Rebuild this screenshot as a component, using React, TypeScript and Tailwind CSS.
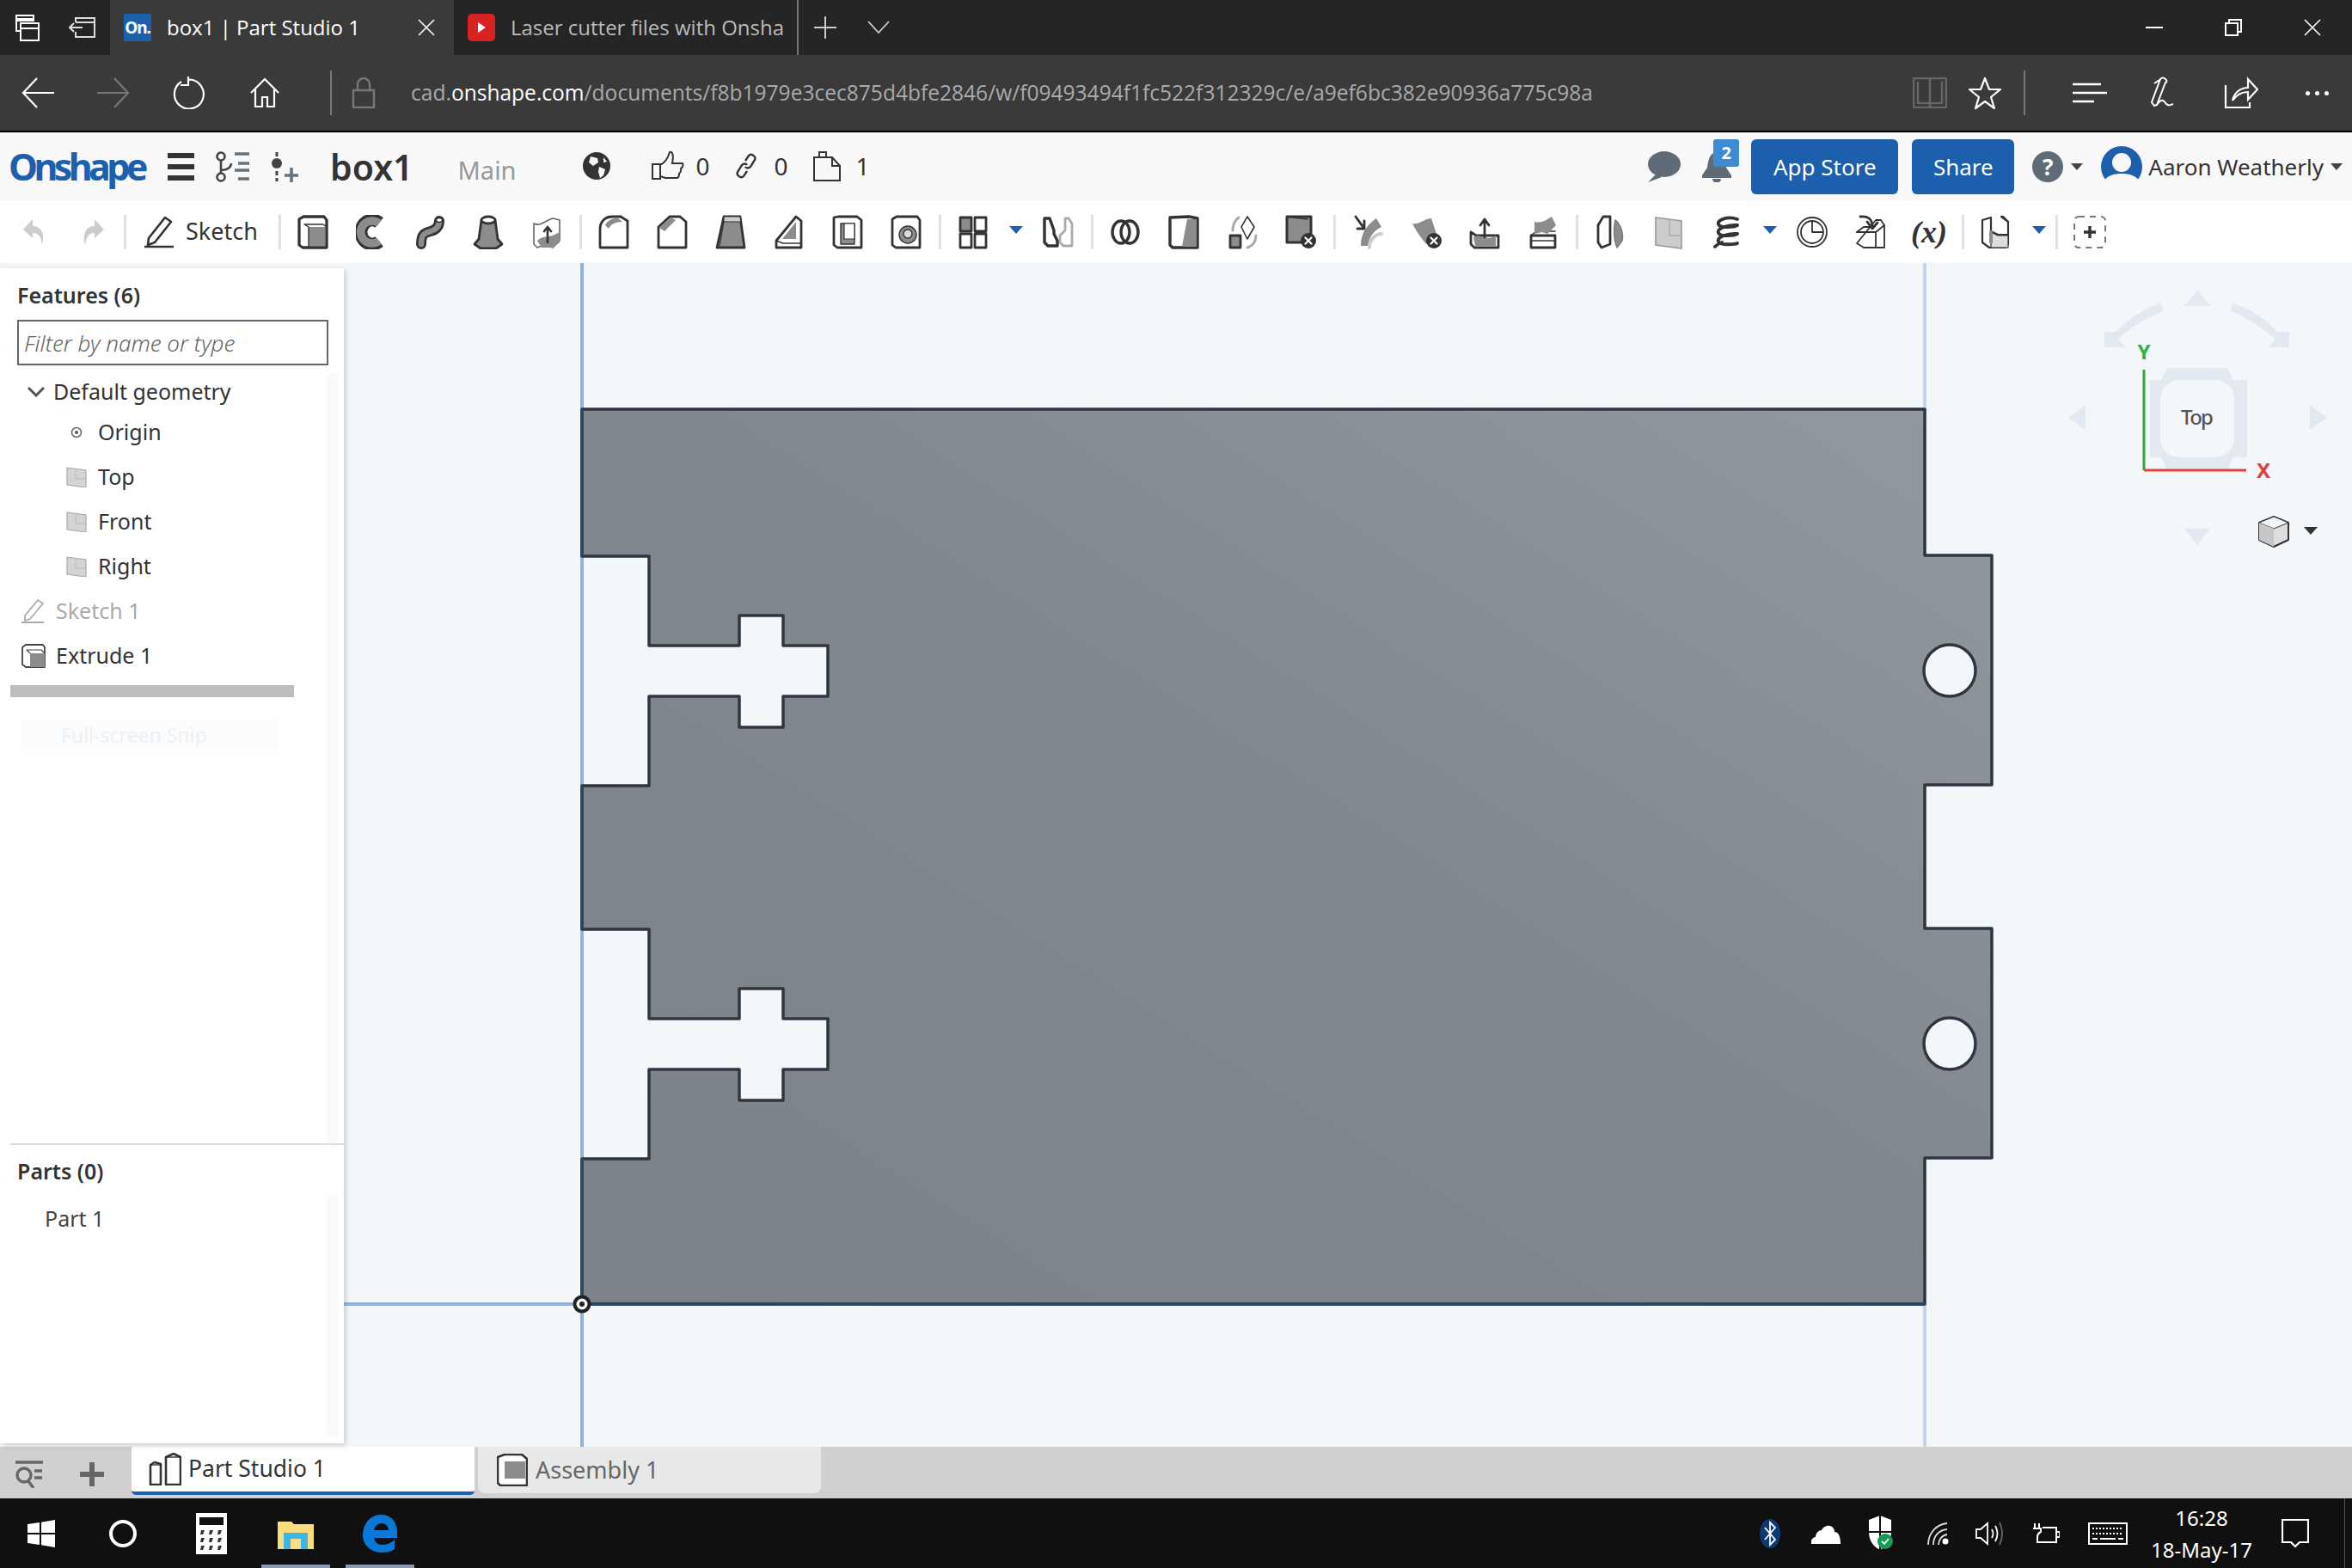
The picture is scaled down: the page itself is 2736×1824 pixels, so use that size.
import type { ReactNode } from "react";

const url =
  "/documents/f8b1979e3cec875d4bfe2846/w/f09493494f1fc522f312329c/e/a9ef6bc382e90936a775c98a";

// toolbar glyph wrapper, everything shares the same stroke setup
function Ico({ children }: { children: ReactNode }) {
  return (
    <svg
      viewBox="0 0 36 40"
      className="w-[36px] h-[40px]"
      fill="none"
      stroke="#333"
      strokeWidth={2.8}
      strokeLinejoin="round"
      strokeLinecap="round"
    >
      {children}
    </svg>
  );
}

const G = "#8c8c8c";

const BoxOutline = () => <path d="M2 5l5-3h24l3 4v32H6l-4-3z" fill="#fff" />;

const XBadge = () => (
  <g>
    <circle cx="27" cy="30" r="9" fill="#333" stroke="none" />
    <path d="M23.500 26.500l7 7m0-7l-7 7" stroke="#fff" strokeWidth={2.2} />
  </g>
);

const tools: Record<string, ReactNode> = {
  extrude: (
    <Ico>
      <BoxOutline />
      <path d="M13 14h21v24H13z" fill={G} stroke="none" />
      <path d="M13 14l-5-3h22l4 3M13 14v24" strokeWidth={1.4} />
      <path d="M2 5l5-3h24l3 4v32H6l-4-3z" />
    </Ico>
  ),
  revolve: (
    <Ico>
      <path d="M27 9A13 14 0 1 0 27 31" stroke="#333" strokeWidth={15} strokeLinecap="butt" />
      <path d="M27 10A13 13 0 1 0 27 30" stroke={G} strokeWidth={9.500} strokeLinecap="butt" />
      <path d="M31 19l-9 1 9 3" stroke="#fff" strokeWidth={1.6} />
    </Ico>
  ),
  sweep: (
    <Ico>
      <path d="M8 34c0-12 4-13 11-15s10-6 10-12" stroke="#333" strokeWidth={12} />
      <path d="M8 34c0-12 4-13 11-15s10-6 10-12" stroke={G} strokeWidth={6.500} />
      <ellipse cx="29" cy="6" rx="3.500" ry="2.500" fill="#fff" strokeWidth={1.4} />
    </Ico>
  ),
  loft: (
    <Ico>
      <path d="M10 6L7 28 2 34l7 5h18l7-5-5-6-3-22z" fill={G} />
      <ellipse cx="18" cy="6" rx="8" ry="4" fill="#fff" />
    </Ico>
  ),
  thicken: (
    <Ico>
      <path d="M3 10c8 4 14-4 22-6l8 2v24l-8 8c-8-4-14-2-18 0l-4-4z" fill="#fff" strokeWidth={1.6} stroke="#666" />
      <path d="M7 30c6-6 12-4 18-6l8-4v12l-8 6H12z" fill={G} stroke="none" />
      <path d="M19 32V14m-4 5l4-5 4 5" strokeWidth={2.6} />
    </Ico>
  ),
  fillet: (
    <Ico>
      <path d="M2 16C2 8 8 2 16 2h10l8 5v31H2z" fill="#fff" />
      <path d="M8 12c2-5 8-8 14-9l6 5c-8 0-14 3-16 8z" fill={G} stroke="none" />
    </Ico>
  ),
  chamfer: (
    <Ico>
      <path d="M2 14L15 2h12l7 6v30H2z" fill="#fff" />
      <path d="M3 15L16 3l6 3L9 19z" fill={G} stroke="none" />
    </Ico>
  ),
  draft: (
    <Ico>
      <path d="M10 2h19l5 36H2z" fill={G} />
      <path d="M10 2h19l1 6H10zM10 8L5 36" strokeWidth={1.2} fill="#ccc" />
    </Ico>
  ),
  rib: (
    <Ico>
      <path d="M26 2l6 5v31H3v-8z" fill="#fff" />
      <path d="M26 8v20H10z" fill={G} stroke="none" />
      <path d="M3 30l8 3h21" strokeWidth={1.6} />
    </Ico>
  ),
  shell: (
    <Ico>
      <path d="M2 3l5-1h22l5 4v32H6l-4-3z" fill="#fff" />
      <path d="M10 10h16v24H10z" fill={G} strokeWidth={1.4} />
      <path d="M14 10h12v18H14z" fill="#fff" strokeWidth={1.2} />
    </Ico>
  ),
  hole: (
    <Ico>
      <BoxOutline />
      <circle cx="20" cy="23" r="10" fill={G} strokeWidth={1.4} />
      <circle cx="20" cy="22" r="5" fill="#ddd" strokeWidth={1.4} />
    </Ico>
  ),
  pattern: (
    <Ico>
      <path d="M3 3h13v16H3z" fill={G} />
      <path d="M20 3h13v16H20zM3 22h13v16H3zM20 22h13v16H20z" fill="#fff" />
    </Ico>
  ),
  mirror: (
    <Ico>
      <path d="M20 24v8l4 4h10V10l-4-6h-4v14z" fill="#fff" stroke="#aaa" />
      <path d="M2 4h6l5 14v4l4 8v6H6l-4-4z" fill="#fff" strokeWidth={3.4} />
    </Ico>
  ),
  boolean: (
    <Ico>
      <ellipse cx="13" cy="20" rx="10" ry="13" strokeWidth={3.4} />
      <ellipse cx="23" cy="20" rx="10" ry="13" strokeWidth={3.4} />
    </Ico>
  ),
  split: (
    <Ico>
      <path d="M2 3l22-1 10 2v34H5l-3-3z" fill="#fff" strokeWidth={3.4} />
      <path d="M22 5h11v32H16z" fill={G} stroke="none" />
    </Ico>
  ),
  transform: (
    <Ico>
      <path d="M4 24h12v14H4z" fill={G} />
      <path d="M24 2l8 12-8 14-7-14z" fill="#fff" strokeWidth={1.6} />
      <path d="M7 18C7 10 10 6 14 3M34 24c0 8-4 12-10 14" stroke="#aaa" strokeWidth={3} />
    </Ico>
  ),
  deletePart: (
    <Ico>
      <path d="M2 2h28v30H2z" fill={G} strokeWidth={3} />
      <path d="M2 2l24 3" strokeWidth={1.4} />
      <XBadge />
    </Ico>
  ),
  moveFace: (
    <Ico>
      <path d="M10 36C10 24 14 14 28 4l6 10c-12 6-14 14-16 22z" fill={G} stroke="none" />
      <path d="M20 38c0-8 6-16 14-16" stroke="#ccc" strokeWidth={4} />
      <path d="M4 2l10 14m0-9v9H6" strokeWidth={2.8} />
    </Ico>
  ),
  deleteFace: (
    <Ico>
      <path d="M2 10c8 2 14-6 22-6l6 18-12 12C12 26 8 22 2 10z" fill={G} stroke="none" />
      <XBadge />
    </Ico>
  ),
  replaceFace: (
    <Ico>
      <path d="M2 20l6 4h26v14H6l-4-4z" fill="#fff" />
      <path d="M5 26c8-6 14 6 26-2v12H7z" fill={G} stroke="none" />
      <path d="M18 26V6m-5 6l5-7 5 7" strokeWidth={2.8} />
    </Ico>
  ),
  offsetFace: (
    <Ico>
      <path d="M4 24h28v14H4z" fill="#fff" />
      <path d="M4 24l6-5h22M4 30h28" strokeWidth={1.6} />
      <path d="M8 8c8 2 14-2 20-6l5 10-10 10-6-2-9 2z" fill={G} stroke="none" />
    </Ico>
  ),
  planeSolid: (
    <Ico>
      <path d="M4 12l6-10h8v32l-10 4-4-6z" fill="#fff" strokeWidth={2.8} />
      <path d="M24 6c6 4 10 16 8 24l-6 8c-4-8-4-24-2-32z" fill={G} stroke="#777" strokeWidth={1.4} />
    </Ico>
  ),
  plane: (
    <svg viewBox="0 0 36 40" className="w-[36px] h-[40px]">
      <path d="M3 3l30 4v32L3 35z" fill="#ccc" stroke="#999" strokeWidth={1.6} />
      <path d="M19 6v18h14" fill="none" stroke="#aaa" strokeWidth={1.4} />
    </svg>
  ),
  helix: (
    <Ico>
      <path
        d="M30 5C18 1 6 6 8 11s18 3 22 1M30 12C18 11 6 16 8 21s18 3 22 1M30 22C18 21 6 26 8 31s20 3 22 2M4 37c2-2 4-4 8-5"
        strokeWidth={3.8}
      />
    </Ico>
  ),
  clock: (
    <Ico>
      <circle cx="18" cy="20" r="17" strokeWidth={1.8} />
      <circle cx="18" cy="20" r="13" strokeWidth={1.8} />
      <path d="M18 8v12h12" strokeWidth={1.8} />
    </Ico>
  ),
  insert: (
    <Ico>
      <path d="M2 20l8-6h8M24 6h6l4 6v26H10L2 33z" fill="#fff" strokeWidth={1.8} />
      <path d="M2 20h22v18M24 20l10-8" strokeWidth={1.8} />
      <path d="M6 2c8-1 14 2 14 12m-6-6l6 8 6-7" strokeWidth={2.8} />
    </Ico>
  ),
  custom: (
    <Ico>
      <path d="M2 6l10-3v16l8 4h12V8l-6-6v0h-2l8 6v26l-3 4H10l-8-6z" fill="#fff" strokeWidth={2.2} />
      <path d="M12 20l8 4h12v14H12z" fill="#ddd" strokeWidth={1.2} />
      <path d="M12 20v12" stroke={G} strokeWidth={4} />
    </Ico>
  ),
  addCustom: (
    <svg viewBox="0 0 40 40" className="w-[40px] h-[40px]" fill="none">
      <rect x="2" y="2" width="36" height="36" rx="5" stroke="#777" strokeWidth={2} strokeDasharray="7 6" />
      <path d="M20 13v14M13 20h14" stroke="#333" strokeWidth={3.4} />
    </svg>
  ),
};

type ToolItem = { id: string } | "sep" | "caret" | "formula";

const toolRow: ToolItem[] = [
  { id: "extrude" }, { id: "revolve" }, { id: "sweep" }, { id: "loft" }, { id: "thicken" }, "sep",
  { id: "fillet" }, { id: "chamfer" }, { id: "draft" }, { id: "rib" }, { id: "shell" }, { id: "hole" }, "sep",
  { id: "pattern" }, "caret", { id: "mirror" }, "sep",
  { id: "boolean" }, { id: "split" }, { id: "transform" }, { id: "deletePart" }, "sep",
  { id: "moveFace" }, { id: "deleteFace" }, { id: "replaceFace" }, { id: "offsetFace" }, "sep",
  { id: "planeSolid" }, { id: "plane" }, { id: "helix" }, "caret", { id: "clock" }, { id: "insert" }, "formula", "sep",
  { id: "custom" }, "caret", "sep", { id: "addCustom" },
];

const Sep = () => <div className="w-[3px] h-[40px] ml-[4px] mr-[3px] bg-[#e0e0e0]" />;

const BlueCaret = () => (
  <div className="w-[31px] flex justify-center">
    <div className="w-0 h-0 border-x-[8px] border-x-transparent border-t-[9px] border-t-[#1b5fad] -mt-[6px]" />
  </div>
);

const DarkCaret = () => (
  <div className="w-0 h-0 border-x-[7px] border-x-transparent border-t-[8px] border-t-[#444]" />
);

function PlaneIcon() {
  return (
    <svg viewBox="0 0 24 24" className="w-[24px] h-[24px]">
      <path d="M1 1l22 3v20L1 21z" fill="#d4d4d4" stroke="#aaa" strokeWidth={1.2} />
      <path d="M11 3v11h12" fill="none" stroke="#bbb" strokeWidth={1} />
    </svg>
  );
}

function TreeRow({ icon, label, indent, muted }: { icon: ReactNode; label: string; indent?: boolean; muted?: boolean }) {
  return (
    <div className={`flex items-center h-[52px] ${indent ? "pl-[77px]" : "pl-[25px]"}`}>
      <div className={`flex items-center justify-center shrink-0 ${indent ? "w-[24px] mr-[13px]" : "w-[28px] mr-[12px]"}`}>{icon}</div>
      <span className={`text-[25px] ${muted ? "text-[#aaa]" : "text-[#333]"}`}>{label}</span>
    </div>
  );
}

function Canvas() {
  const body =
    "M677 476 H2239 V646 H2317 V913 H2239 V1080 H2317 V1347 H2239 V1517 H677 " +
    "V1348 H755 V1244 H860 V1280 H911 V1244 H963 V1185 H911 V1150 H860 V1185 H755 V1081 H677 " +
    "V914 H755 V810 H860 V846 H911 V810 H963 V751 H911 V716 H860 V751 H755 V647 H677 Z";
  return (
    <svg viewBox="0 0 2336 1377" className="w-full h-full block">
      <defs>
        <linearGradient id="plate" x1="1" y1="0" x2="0" y2="1">
          <stop offset="0" stopColor="#92999f" />
          <stop offset="0.45" stopColor="#82888f" />
          <stop offset="1" stopColor="#7b828a" />
        </linearGradient>
      </defs>
      <g transform="translate(-400 -306)">
        <path d="M677 306V1683" stroke="#8fb3dc" strokeWidth={4} />
        <path d="M2239 306V1683" stroke="#c4d6ea" strokeWidth={4} />
        <path d="M400 1517H677" stroke="#8fb3dc" strokeWidth={4} />
        <path d={body} fill="url(#plate)" stroke="#2e3740" strokeWidth={3.500} strokeLinejoin="round" />
        <path d="M677 476V647M677 914V1081M677 1348V1517H2239" fill="none" stroke="#284763" strokeWidth={3.500} />
        <path d="M677 649V912M677 1083V1346" stroke="#8fb3dc" strokeWidth={4} />
        <circle cx="2268" cy="780" r="30" fill="#f4f7fa" stroke="#2e3740" strokeWidth={3.500} />
        <circle cx="2268" cy="1214" r="30" fill="#f4f7fa" stroke="#2e3740" strokeWidth={3.500} />
        <circle cx="677" cy="1517" r="8.500" fill="#f4f7fa" stroke="#222" strokeWidth={4} />
        <circle cx="677" cy="1517" r="3" fill="#222" />

        {/* view cube */}
        <g fill="#e2e9f1" stroke="none">
          <path d="M2556 337l15 19h-30z" />
          <path d="M2556 634l15-19h-30z" />
          <path d="M2406 486l20-15v29z" />
          <path d="M2707 486l-20-15v29z" />
          <path d="M2514 352c-22 8-40 20-52 34l-14-0-0 18 24-0-8-9c12-12 30-24 52-33z" />
          <path d="M2597 352c22 8 40 20 52 34l14 0 0 18-24 0 8-9c-12-12-30-24-52-33z" />
          <path
            fillRule="evenodd"
            d="M2521 428h70l7 14h16v90h-16l-7 14h-70l-7-14h-13v-90h13z M2535 442a22 22 0 0 0-22 22v46a22 22 0 0 0 22 22h42a22 22 0 0 0 22-22v-46a22 22 0 0 0-22-22z"
          />
        </g>
        <text x="2556" y="494" textAnchor="middle" fontSize="24" fontFamily="Noto Sans, sans-serif" fontWeight="500" fill="#555" textLength="38">
          Top
        </text>
        <path d="M2494 430V547" stroke="#33a63f" strokeWidth={3} />
        <path d="M2494 547H2613" stroke="#e2403f" strokeWidth={3} />
        <text x="2494" y="418" textAnchor="middle" fontSize="24" fontWeight="700" fontFamily="Noto Sans, sans-serif" fill="#2fb344">
          Y
        </text>
        <text x="2633" y="556" textAnchor="middle" fontSize="24" fontWeight="700" fontFamily="Noto Sans, sans-serif" fill="#e2403f">
          X
        </text>
        <path d="M2645 601l17 7v20l-17 8-17-8v-20z" fill="#ddd" stroke="#333" strokeWidth={2} strokeLinejoin="round" />
        <path d="M2628 608l17 7 17-7-17-7z" fill="#f4f4f4" stroke="#333" strokeWidth={1} />
        <path d="M2645 615v21l-17-8v-20z" fill="#c6c6c6" />
        <path d="M2680 613h16l-8 9z" fill="#333" />
      </g>
    </svg>
  );
}

export default function App() {
  return (
    <div className="w-[2736px] h-[1824px] flex flex-col overflow-hidden font-['Noto_Sans',sans-serif]">
      {/* browser tabs */}
      <div className="h-[64px] shrink-0 flex bg-[#252525] text-white">
        <div className="w-[128px] flex items-center">
          <svg viewBox="0 0 30 32" className="w-[30px] h-[32px] ml-[17px]" fill="none" stroke="#fff" strokeWidth={2}>
            <path d="M2 2h20v6H2zM2 8v12h4M2 6h20" />
            <path d="M7 11h21v20H7zM7 17h21" fill="#252525" />
          </svg>
          <svg viewBox="0 0 32 24" className="w-[32px] h-[24px] ml-[33px]" fill="none" stroke="#ddd" strokeWidth={2}>
            <path d="M8 6V1h22v22H8v-6M8 6h22M1 12h15M6 7l-5 5 5 5" />
          </svg>
        </div>
        <div className="w-[400px] bg-[#3a3a3a] flex items-center pl-[16px]">
          <div className="w-[32px] h-[32px] bg-[#1b5fad] flex items-center justify-center font-bold text-[19px] tracking-[-1px] leading-none">On.</div>
          <span className="ml-[18px] text-[24px] font-['Open_Sans',sans-serif]">box1 | Part Studio 1</span>
          <svg viewBox="0 0 20 20" className="w-[20px] h-[20px] ml-auto mr-[22px]" stroke="#fff" strokeWidth={1.6}>
            <path d="M1 1l18 18M19 1L1 19" />
          </svg>
        </div>
        <div className="w-[401px] flex items-center pl-[16px] border-r-2 border-[#777]">
          <div className="w-[32px] h-[32px] rounded-[5px] bg-[#d92323] flex items-center justify-center">
            <div className="w-0 h-0 border-y-[6px] border-y-transparent border-l-[9px] border-l-white" />
          </div>
          <span className="ml-[18px] w-[318px] overflow-hidden whitespace-nowrap text-[24px] text-[#bbb] font-['Open_Sans',sans-serif]">
            Laser cutter files with Onshape
          </span>
        </div>
        <div className="flex items-center pl-[18px]">
          <svg viewBox="0 0 26 26" className="w-[26px] h-[26px]" stroke="#ccc" strokeWidth={2}>
            <path d="M13 0v26M0 13h26" />
          </svg>
          <svg viewBox="0 0 26 16" className="w-[26px] h-[16px] ml-[36px]" fill="none" stroke="#ccc" strokeWidth={1.8}>
            <path d="M1 1l12 13L25 1" />
          </svg>
        </div>
        <div className="ml-auto flex items-center">
          <div className="w-[92px] flex justify-center">
            <div className="w-[20px] h-[2px] bg-white" />
          </div>
          <div className="w-[92px] flex justify-center">
            <svg viewBox="0 0 20 20" className="w-[20px] h-[20px]" fill="none" stroke="#fff" strokeWidth={2}>
              <path d="M5 5V1h14v14h-4" />
              <path d="M1 5h14v14H1z" />
            </svg>
          </div>
          <div className="w-[92px] flex justify-center">
            <svg viewBox="0 0 20 20" className="w-[20px] h-[20px]" stroke="#fff" strokeWidth={1.6}>
              <path d="M1 1l18 18M19 1L1 19" />
            </svg>
          </div>
        </div>
      </div>

      {/* address bar */}
      <div className="h-[90px] shrink-0 flex items-center bg-[#3a3a3a] border-b-2 border-black">
        <svg viewBox="0 0 38 36" className="w-[38px] h-[36px] ml-[25px]" fill="none" stroke="#fff" strokeWidth={2.2}>
          <path d="M38 18H2M18 1L2 18l16 17" />
        </svg>
        <svg viewBox="0 0 38 36" className="w-[38px] h-[36px] ml-[50px]" fill="none" stroke="#777" strokeWidth={2.2}>
          <path d="M0 18h36M20 1l16 17-16 17" />
        </svg>
        <svg viewBox="0 0 38 38" className="w-[38px] h-[38px] ml-[50px]" fill="none" stroke="#fff" strokeWidth={2.2}>
          <path d="M10 6a17 17 0 1 0 9-2.500M18 0v10h-9" />
        </svg>
        <svg viewBox="0 0 36 36" className="w-[36px] h-[36px] ml-[51px]" fill="none" stroke="#fff" strokeWidth={2.2}>
          <path d="M2 18L18 2l16 16M7 14v20h8V23h6v11h8V14" />
        </svg>
        <div className="w-[2px] h-[52px] bg-[#777] ml-[58px]" />
        <svg viewBox="0 0 28 36" className="w-[28px] h-[36px] ml-[23px]" fill="none" stroke="#777" strokeWidth={2.4}>
          <path d="M2 15h24v20H2zM7 15V8a7 7 0 0 1 14 0v7" />
        </svg>
        <span className="ml-[41px] text-[24.550px] text-[#aaa] font-['Open_Sans',sans-serif] whitespace-nowrap">
          cad.<span className="text-white">onshape.com</span>
          {url}
        </span>
        <div className="ml-auto flex items-center">
          <svg viewBox="0 0 40 36" className="w-[40px] h-[36px]" fill="none" stroke="#666" strokeWidth={2.4}>
            <path d="M1 1h18l1 2 1-2h18v34H1zM20 3v32M6 5v25h13M34 5v25H21" />
          </svg>
          <svg viewBox="0 0 40 40" className="w-[40px] h-[40px] ml-[24px]" fill="none" stroke="#fff" strokeWidth={2.2} strokeLinejoin="round">
            <path d="M20 3l5 13h13l-11 9 4 13-11-8-11 8 4-13L2 16h13z" />
          </svg>
          <div className="w-[2px] h-[52px] bg-[#777] ml-[25px]" />
          <svg viewBox="0 0 40 24" className="w-[40px] h-[24px] ml-[55px]" fill="none" stroke="#fff" strokeWidth={2.4}>
            <path d="M0 2h33M0 12h40M0 22h25" />
          </svg>
          <svg viewBox="0 0 36 38" className="w-[36px] h-[38px] ml-[51px]" fill="none" stroke="#fff" strokeWidth={2}>
            <path d="M4 34L1 30 11 3q3-3 6 0t0 4L7 33zM4 8l6-4M6 34c6-8 8-8 12-2 3 3 5 1 8 0" />
          </svg>
          <svg viewBox="0 0 40 38" className="w-[40px] h-[38px] ml-[49px]" fill="none" stroke="#fff" strokeWidth={2.2}>
            <path d="M2 10v26h28v-6M10 28c2-10 10-15 18-15V3l11 12-11 12V18c-8 0-14 4-18 10z" />
          </svg>
          <div className="ml-[55px] mr-[27px] flex gap-[6px]">
            <div className="w-[5px] h-[5px] rounded-full bg-white" />
            <div className="w-[5px] h-[5px] rounded-full bg-white" />
            <div className="w-[5px] h-[5px] rounded-full bg-white" />
          </div>
        </div>
      </div>

      {/* document header */}
      <div className="h-[79px] shrink-0 flex items-center bg-[#f8f8f8] text-[#333]">
        <span className="ml-[10px] w-[160px] text-[43px] font-bold text-[#1b5fad] tracking-[-4.600px] leading-none">Onshape</span>
        <div className="ml-[25px] w-[31px] flex flex-col gap-[7px]">
          <div className="h-[6px] bg-[#333]" />
          <div className="h-[6px] bg-[#333]" />
          <div className="h-[6px] bg-[#333]" />
        </div>
        <svg viewBox="0 0 42 36" className="w-[42px] h-[36px] ml-[23px]" fill="none" stroke="#444" strokeWidth={2.6}>
          <circle cx="8" cy="6" r="4.500" />
          <circle cx="8" cy="30" r="4.500" />
          <path d="M8 11v14M8 22c8 0 12-4 12-8" />
          <path d="M24 3h17M28 14h13M24 22h17M28 32h13" stroke="#66717c" strokeWidth={3.6} />
        </svg>
        <svg viewBox="0 0 34 38" className="w-[34px] h-[38px] ml-[23px]" fill="none">
          <circle cx="8" cy="15" r="6" fill="#444" />
          <path d="M8 2v5M8 24v12" stroke="#444" strokeWidth={3} strokeDasharray="5 3" />
          <path d="M25 20v17M17 29h16" stroke="#66717c" strokeWidth={3.6} />
        </svg>
        <span className="ml-[36px] mt-[2px] text-[41px] font-semibold leading-none">box1</span>
        <span className="ml-[52px] mt-[8px] text-[29px] text-[#999] leading-none">Main</span>
        <svg viewBox="0 0 34 34" className="w-[34px] h-[34px] ml-[76px] -mt-[2px]">
          <circle cx="17" cy="17" r="16" fill="#333" />
          <path d="M10 6l8 2 1 5-6 4-5-4zM20 18l7 3-2 7-4 3-2-7zM25 7l4 5-4 1z" fill="#f8f8f8" />
        </svg>
        <svg viewBox="0 0 38 36" className="w-[38px] h-[36px] ml-[47px] -mt-[2px]" fill="none" stroke="#333" strokeWidth={2}>
          <path d="M1 16h9v17H1zM10 17c6-3 9-8 11-15 3-1 5 3 3 13h12c1 3 0 5-2 6 1 3-1 5-2 6 0 3-1 5-3 5H16l-6-2" />
        </svg>
        <span className="ml-[14px] text-[28px] -mt-[2px] leading-none">0</span>
        <svg viewBox="0 0 26 30" className="w-[26px] h-[30px] ml-[29px] -mt-[2px]" fill="none" stroke="#333" strokeWidth={2.4}>
          <path d="M12 9l4-6c3-3 9 1 7 5l-5 8c-2 2-5 2-6 0M14 21l-4 6c-3 3-9-1-7-5l5-8c2-2 5-2 6 0" />
        </svg>
        <span className="ml-[20px] text-[28px] -mt-[2px] leading-none">0</span>
        <svg viewBox="0 0 32 36" className="w-[32px] h-[36px] ml-[29px] -mt-[2px]" fill="none" stroke="#333" strokeWidth={2}>
          <path d="M10 8H1v27h30V18l-9-10zM22 8v10h9M7 8V2h8v6" />
        </svg>
        <span className="ml-[18px] text-[28px] -mt-[2px] leading-none">1</span>

        <div className="ml-auto flex items-center mt-[1px] mr-[3px]">
          <svg viewBox="0 0 40 36" className="w-[40px] h-[36px]" fill="#5f6b76">
            <ellipse cx="21" cy="15" rx="19" ry="15" />
            <path d="M12 26L2 36l16-6z" />
          </svg>
          <div className="relative ml-[24px] mr-[6px]">
            <svg viewBox="0 0 36 36" className="w-[36px] h-[36px]" fill="#5f6b76">
              <path d="M18 1c8 0 10 10 11 18l6 9v3H1v-3l6-9C8 11 10 1 18 1zM13 32h10a5 5 0 0 1-10 0z" />
            </svg>
            <div className="absolute -top-[14px] left-[14px] w-[30px] h-[32px] rounded-[3px] bg-[#3d8bd4] text-white text-[20px] font-bold flex items-center justify-center">2</div>
          </div>
          <div className="ml-[16px] w-[171px] h-[64px] rounded-[6px] bg-[#1b5fad] text-white text-[26px] flex items-center justify-center">App Store</div>
          <div className="ml-[16px] w-[119px] h-[64px] rounded-[6px] bg-[#1b5fad] text-white text-[26px] flex items-center justify-center">Share</div>
          <div className="ml-[21px] w-[36px] h-[36px] rounded-full bg-[#5f6b76] text-white text-[26px] font-bold flex items-center justify-center">?</div>
          <div className="ml-[9px]"><DarkCaret /></div>
          <svg viewBox="0 0 48 48" className="w-[48px] h-[48px] ml-[21px]">
            <circle cx="24" cy="24" r="24" fill="#1b5fad" />
            <circle cx="24" cy="19" r="11" fill="#f8f8f8" />
            <path d="M2 48c0-12 10-16 22-16s22 4 22 16z" fill="#f8f8f8" />
          </svg>
          <span className="ml-[7px] text-[26px] whitespace-nowrap">Aaron Weatherly</span>
          <div className="ml-[8px] mr-[8px]"><DarkCaret /></div>
        </div>
      </div>

      {/* feature toolbar */}
      <div className="h-[73px] shrink-0 flex items-center bg-white">
        <svg viewBox="0 0 28 34" className="w-[28px] h-[34px] ml-[26px]" fill="#ccc">
          <path d="M12 2L1 14l11 10v-6c6 0 10 4 11 14 4-14-2-22-11-22z" />
        </svg>
        <svg viewBox="0 0 28 34" className="w-[28px] h-[34px] ml-[40px]" fill="#ccc">
          <path d="M16 2l11 12-11 10v-6C10 18 6 22 5 32 1 18 7 10 16 10z" />
        </svg>
        <div className="w-[3px] h-[40px] ml-[22px] bg-[#e0e0e0]" />
        <svg viewBox="0 0 36 38" className="w-[36px] h-[38px] ml-[21px]" fill="none" stroke="#333" strokeWidth={2.6} strokeLinejoin="round">
          <path d="M5 26L24 2l7 5-19 24-8 3zM0 36h34" />
        </svg>
        <span className="ml-[12px] w-[108px] text-[27px] text-[#333]">Sketch</span>
        <div className="w-[3px] h-[40px] bg-[#e0e0e0]" />
        <div className="flex items-center ml-[3px] mt-[1px]">
          {toolRow.map((t, i) =>
            t === "sep" ? (
              <Sep key={i} />
            ) : t === "caret" ? (
              <BlueCaret key={i} />
            ) : t === "formula" ? (
              <div key={i} className="w-[68px] flex justify-center font-['Liberation_Serif',serif] text-[36px] leading-none font-bold italic text-[#333]">
                (x)
              </div>
            ) : (
              <div key={i} className="w-[68px] flex justify-center">
                {tools[t.id]}
              </div>
            ),
          )}
        </div>
      </div>

      {/* panel + graphics area */}
      <div className="flex-1 min-h-0 flex bg-[#f4f7fa]">
        <aside className="w-[400px] shrink-0 mt-[6px] mb-[4px] bg-white shadow-[2px_2px_6px_rgba(0,0,0,0.18)] flex flex-col text-[#333] relative z-10">
          <div className="h-[1018px] shrink-0 flex flex-col">
            <div className="px-[20px] pt-[14px]">
              <div className="text-[25px] font-semibold leading-[34px]">Features (6)</div>
              <div className="mt-[12px] h-[53px] w-[362px] border-2 border-[#666] flex items-center pl-[6px] pt-[1px] text-[26px] font-light italic text-[#666]">
                Filter by name or type
              </div>
            </div>
            <div className="flex-1 min-h-0 flex mt-[8px]">
              <div className="flex-1 min-w-0">
                <div className="flex items-center h-[44px] pl-[32px] pt-[2px]">
                  <svg viewBox="0 0 20 12" className="w-[20px] h-[12px]" fill="none" stroke="#555" strokeWidth={3}>
                    <path d="M1 1l9 9 9-9" />
                  </svg>
                  <span className="ml-[10px] text-[25px]">Default geometry</span>
                </div>
                <TreeRow
                  indent
                  label="Origin"
                  icon={
                    <svg viewBox="0 0 14 14" className="w-[14px] h-[14px]" fill="none">
                      <circle cx="7" cy="7" r="5.500" stroke="#666" strokeWidth={1.5} />
                      <circle cx="7" cy="7" r="2" fill="#555" />
                    </svg>
                  }
                />
                <TreeRow indent label="Top" icon={<PlaneIcon />} />
                <TreeRow indent label="Front" icon={<PlaneIcon />} />
                <TreeRow indent label="Right" icon={<PlaneIcon />} />
                <TreeRow
                  muted
                  label="Sketch 1"
                  icon={
                    <svg viewBox="0 0 28 28" className="w-[28px] h-[28px]" fill="none" stroke="#aaa" strokeWidth={1.8} strokeLinejoin="round">
                      <path d="M4 19L19 1l6 4-15 18-6 2zM0 27h26" />
                    </svg>
                  }
                />
                <TreeRow
                  label="Extrude 1"
                  icon={
                    <svg viewBox="0 0 28 28" className="w-[28px] h-[28px]" fill="none" stroke="#444" strokeWidth={1.8} strokeLinejoin="round">
                      <path d="M1 4l4-3h20l2 3v23H5l-4-3z" fill="#fff" />
                      <path d="M10 11h17v16H10z" fill="#8c8c8c" stroke="none" />
                      <path d="M10 11L6 7h17l4 4" strokeWidth={1.2} />
                    </svg>
                  }
                />
                <div className="ml-[12px] mt-[8px] w-[330px] h-[14px] bg-[#bdbdbd]" />
                <div className="ml-[24px] mt-[26px] w-[300px] h-[36px] bg-[#fbfcfd] flex items-center pl-[47px] text-[23px] text-[#eef1f4]">
                  Full-screen Snip
                </div>
              </div>
              <div className="w-[14px] mr-[6px] mt-[1px] bg-[#f9fafb]" />
            </div>
          </div>
          <div className="ml-[12px] h-[2px] shrink-0 bg-[#d8dce0]" />
          <div className="flex-1 min-h-0 flex flex-col">
            <div className="pl-[20px] pt-[13px] text-[25px] font-semibold leading-[34px]">Parts (0)</div>
            <div className="flex-1 flex mt-[12px]">
              <div className="flex-1 text-[25px] pl-[52px] leading-[52px] text-[#444]">Part 1</div>
              <div className="w-[14px] mr-[6px] mb-[8px] bg-[#f9fafb]" />
            </div>
          </div>
        </aside>
        <div className="flex-1 min-w-0">
          <Canvas />
        </div>
      </div>

      {/* document tabs */}
      <div className="h-[60px] shrink-0 flex bg-[#d0d0d0]">
        <svg viewBox="0 0 34 32" className="w-[34px] h-[32px] ml-[17px] mt-[16px]" fill="none" stroke="#666" strokeWidth={3.4}>
          <path d="M1 2h32M23 12h9M23 20h9" />
          <circle cx="11" cy="17" r="8" />
          <path d="M16 24l6 8" />
        </svg>
        <svg viewBox="0 0 28 28" className="w-[28px] h-[28px] ml-[42px] mt-[18px]" stroke="#666" strokeWidth={6}>
          <path d="M14 0v28M0 14h28" />
        </svg>
        <div className="ml-[32px] w-[399px] h-[56px] bg-white border-b-4 border-[#1b5fad] rounded-b-[5px] flex items-center pl-[20px]">
          <svg viewBox="0 0 38 38" className="w-[38px] h-[38px]" fill="#fff" stroke="#333" strokeWidth={2.6} strokeLinejoin="round">
            <path d="M2 14l5-3 7 2v24H2z" />
            <path d="M2 14h12" strokeWidth={1.4} />
            <path d="M20 5l9-4 8 4v32H20z" />
            <path d="M20 5h17" strokeWidth={1.4} />
          </svg>
          <span className="ml-[8px] text-[26.500px] text-[#333]">Part Studio 1</span>
        </div>
        <div className="ml-[4px] w-[399px] h-[54px] bg-[#e8e8e8] rounded-b-[8px] flex items-center pl-[22px]">
          <svg viewBox="0 0 36 38" className="w-[36px] h-[38px]" fill="none" stroke="#333" strokeWidth={2.6} strokeLinejoin="round">
            <path d="M1 4l8-3h20l6 5v31H4l-3-3z" fill="#fff" />
            <path d="M9 9h24v20H9z" fill="#8c8c8c" stroke="none" />
          </svg>
          <span className="ml-[9px] text-[27px] text-[#666]">Assembly 1</span>
        </div>
      </div>

      {/* windows taskbar */}
      <div className="h-[81px] shrink-0 flex items-center bg-[#101010] text-white">
        <svg viewBox="0 0 32 32" className="w-[32px] h-[32px] ml-[32px]" fill="#fff">
          <path d="M0 5l14-2v12H0zM16 2.700L32 0v15H16zM0 17h14v12L0 27zM16 17h16v15l-16-2.700z" />
        </svg>
        <div className="ml-[63px] w-[32px] h-[32px] rounded-full border-[4px] border-white" />
        <svg viewBox="0 0 36 48" className="w-[36px] h-[48px] ml-[69px]">
          <rect width="36" height="48" fill="#fff" />
          <rect x="4" y="5" width="28" height="9" fill="#111" />
          <path d="M6 20h4l-2 5H5zM16 20h4l-2 5h-3zM26 20h4l-2 5h-3zM6 29h4l-2 5H5zM16 29h4l-2 5h-3zM26 29h4l-2 5h-3zM6 38h4l-2 5H5zM16 38h4l-2 5h-3zM26 38h4l-2 5h-3z" fill="#333" />
        </svg>
        <div className="relative ml-[40px] self-stretch w-[80px] flex items-center justify-center">
          <svg viewBox="0 0 42 36" className="w-[42px] h-[36px]">
            <path d="M0 4h16l3 3h23v29H0z" fill="#fbdd7e" />
            <rect x="7" y="17" width="28" height="19" fill="#3fb6e8" />
            <rect x="15" y="24" width="12" height="12" fill="#fbdd7e" />
          </svg>
          <div className="absolute bottom-0 inset-x-0 h-[4px] bg-[#8a9bb0]" />
        </div>
        <div className="relative ml-[18px] self-stretch w-[80px] flex items-center justify-center">
          <svg viewBox="0 0 40 44" className="w-[40px] h-[44px]">
            <path
              fill="#0a78d7"
              d="M21 0C9 0 1 10 0 22c-1 12 8 22 22 22 6 0 11-1 15-4V29c-4 4-9 6-14 6-6 0-9-3-10-8h27v-6C40 8 33 0 21 0zm-8 18c1-5 5-8 9-8s8 3 8 8z"
            />
          </svg>
          <div className="absolute bottom-0 inset-x-0 h-[4px] bg-[#8a9bb0]" />
        </div>

        <div className="ml-auto flex items-center">
          <svg viewBox="0 0 24 34" className="w-[24px] h-[34px]">
            <ellipse cx="12" cy="17" rx="12" ry="17" fill="#0b3a73" />
            <path d="M6 10l12 14-6 6V4l6 6L6 24" fill="none" stroke="#fff" strokeWidth={1.8} />
          </svg>
          <svg viewBox="0 0 34 24" className="w-[34px] h-[24px] ml-[36px]" fill="#fff">
            <path d="M0 24c-1-5 2-8 5-8 0-5 4-8 7-8 2-5 10-8 14-2 1 2 1 2 1 4 4 0 7 4 7 14z" />
          </svg>
          <svg viewBox="0 0 30 42" className="w-[30px] h-[42px] ml-[32px]">
            <path d="M14 0l13 5v14c0 10-6 17-13 21C6 36 1 29 1 19V5z" fill="#fff" />
            <path d="M13 0h2v40h-2zM1 18h26v2H1z" fill="#101010" />
            <circle cx="20" cy="30" r="9" fill="#169a52" />
            <path d="M16 30l3 3 5-6" fill="none" stroke="#fff" strokeWidth={1.8} />
          </svg>
          <svg viewBox="0 0 26 26" className="w-[26px] h-[26px] ml-[38px]" fill="none" stroke="#ddd" strokeWidth={1.8}>
            <path d="M2 26C2 12 12 2 24 1M8 26c0-10 6-17 16-18M14 26c0-6 4-11 10-12" />
            <circle cx="22" cy="22" r="3.500" fill="#fff" stroke="none" />
          </svg>
          <svg viewBox="0 0 32 28" className="w-[32px] h-[28px] ml-[31px]" fill="none" stroke="#fff" strokeWidth={1.8}>
            <path d="M1 9h5l8-7v24l-8-7H1zM19 9q3 5 0 10M23 5q5 9 0 18" />
            <path d="M28 1q6 13 0 26" stroke="#666" />
          </svg>
          <svg viewBox="0 0 32 24" className="w-[32px] h-[24px] ml-[34px]" fill="none" stroke="#fff" strokeWidth={2}>
            <path d="M3 0v6M8 0v6M1 6h9v4q-4 2-4 6v6h22V5H12M29 10h3v6h-3" />
          </svg>
          <svg viewBox="0 0 46 26" className="w-[46px] h-[26px] ml-[33px]" fill="none" stroke="#fff" strokeWidth={2}>
            <rect x="1" y="1" width="44" height="24" />
            <path d="M5 7h36M5 13h36" strokeDasharray="2 2" />
            <path d="M5 19h6M14 19h18M35 19h6" />
          </svg>
          <div className="ml-[22px] w-[128px] text-center text-[24px] leading-[37px]">
            <div>16:28</div>
            <div>18-May-17</div>
          </div>
          <svg viewBox="0 0 32 34" className="w-[32px] h-[34px] ml-[29px]" fill="none" stroke="#fff" strokeWidth={2.2}>
            <path d="M1 1h30v26H21l-5 5-5-5H1z" />
          </svg>
          <div className="ml-[41px] mr-[8px] w-[1px] h-[81px] bg-[#555]" />
        </div>
      </div>
    </div>
  );
}
